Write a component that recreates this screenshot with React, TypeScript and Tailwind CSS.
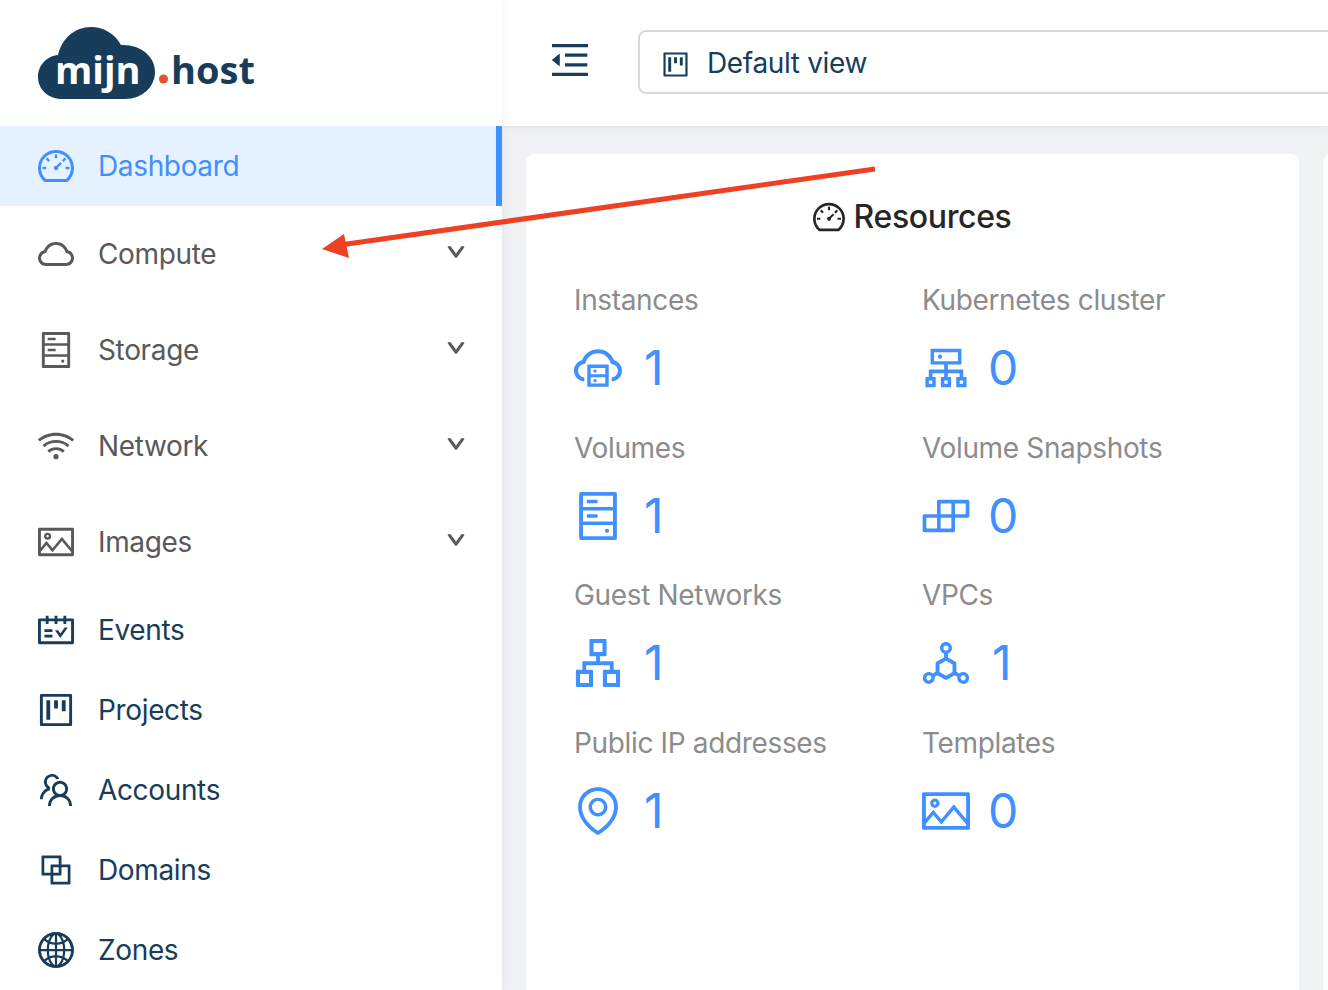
import type { ComponentType, SVGProps } from 'react'
import {
  AiOutlineApartment,
  AiOutlineBlock,
  AiOutlineBuild,
  AiOutlineCloud,
  AiOutlineCloudServer,
  AiOutlineCluster,
  AiOutlineDashboard,
  AiOutlineDeploymentUnit,
  AiOutlineDown,
  AiOutlineEnvironment,
  AiOutlineGlobal,
  AiOutlineHdd,
  AiOutlineMenuFold,
  AiOutlinePicture,
  AiOutlineProject,
  AiOutlineSchedule,
  AiOutlineTeam,
  AiOutlineWifi,
} from 'react-icons/ai'

type Icon = ComponentType<SVGProps<SVGSVGElement> & { size?: number }>

// ant icons keep their art in 64..960, crop so size means the drawn size
const crop = '64 64 896 896'

const groups: { label: string; icon: Icon }[] = [
  { label: 'Compute', icon: AiOutlineCloud },
  { label: 'Storage', icon: AiOutlineHdd },
  { label: 'Network', icon: AiOutlineWifi },
  { label: 'Images', icon: AiOutlinePicture },
]

const links: { label: string; icon: Icon }[] = [
  { label: 'Events', icon: AiOutlineSchedule },
  { label: 'Projects', icon: AiOutlineProject },
  { label: 'Accounts', icon: AiOutlineTeam },
  { label: 'Domains', icon: AiOutlineBlock },
  { label: 'Zones', icon: AiOutlineGlobal },
]

const resources: { label: string; value: number; icon: Icon }[] = [
  { label: 'Instances', value: 1, icon: AiOutlineCloudServer },
  { label: 'Kubernetes cluster', value: 0, icon: AiOutlineCluster },
  { label: 'Volumes', value: 1, icon: AiOutlineHdd },
  { label: 'Volume Snapshots', value: 0, icon: AiOutlineBuild },
  { label: 'Guest Networks', value: 1, icon: AiOutlineApartment },
  { label: 'VPCs', value: 1, icon: AiOutlineDeploymentUnit },
  { label: 'Public IP addresses', value: 1, icon: AiOutlineEnvironment },
  { label: 'Templates', value: 0, icon: AiOutlinePicture },
]

function Logo() {
  return (
    <svg width="230" height="80" viewBox="30 22 230 80" className="block tracking-normal">
      <path
        d="M62 98C48 98 38 88 38 76C38 64 47 55 58 54C62 37 75 26 91 26C104 26 115 33 121 44C140 43 155 55 155 71C155 86 142 98 125 98Z"
        fill="#173d5a"
      />
      <text x="55" y="83" fill="#fff" fontSize="38" fontWeight="700" fontFamily="'Open Sans', sans-serif">mijn</text>
      <circle cx="163.5" cy="78" r="4.5" fill="#e4512b" />
      <text x="171" y="83" fill="#173d5a" fontSize="38" fontWeight="700" fontFamily="'Open Sans', sans-serif">host</text>
    </svg>
  )
}

function Sidebar() {
  return (
    <aside className="z-10 flex h-full w-[502px] shrink-0 flex-col bg-white shadow-[2px_0_8px_rgba(29,35,41,0.05)]">
      <div className="flex h-[126px] shrink-0 items-center pl-[30px]">
        <Logo />
      </div>
      <div className="mb-2 flex h-20 shrink-0 items-center gap-6 border-r-[6px] border-[#4090ff] bg-[#e6f2ff] pl-[38px] text-[#4090ff]">
        <AiOutlineDashboard size={36} viewBox={crop} />
        <span>Dashboard</span>
      </div>
      <div className="mb-2 flex shrink-0 flex-col gap-4">
        {groups.map(g => (
          <div key={g.label} className="flex h-20 items-center gap-6 pl-[38px] pr-[37px] text-[#595959]">
            <g.icon size={36} viewBox={crop} />
            <span className="flex-1">{g.label}</span>
            <AiOutlineDown size={18} viewBox={crop} className="mb-1" strokeWidth={70} />
          </div>
        ))}
      </div>
      {links.map(l => (
        <div key={l.label} className="flex h-20 shrink-0 items-center gap-6 pl-[38px] text-[#173d5a]">
          <l.icon size={36} viewBox={crop} />
          <span>{l.label}</span>
        </div>
      ))}
    </aside>
  )
}

function Header() {
  return (
    <header className="flex h-[126px] shrink-0 items-center bg-white pl-[50px] shadow-[0_2px_8px_rgba(0,21,41,0.06)]">
      <AiOutlineMenuFold size={36} viewBox="114 114 796 796" className="mb-[6px] shrink-0 text-[#173d5a]" />
      <div className="mb-[2px] ml-[50px] flex h-16 w-[900px] shrink-0 items-center gap-[18px] rounded-lg border-2 border-[#d9d9d9] pl-[22px] text-[#173d5a]">
        <AiOutlineProject size={27} viewBox={crop} className="mt-1" />
        <span className="mt-[1px]">Default view</span>
      </div>
    </header>
  )
}

function ResourceCard() {
  return (
    <section className="h-[900px] w-[773px] shrink-0 rounded-lg bg-white px-12 pt-10">
      <h2 className="mb-[38px] flex h-[46px] items-center justify-center gap-2 text-[32px] font-medium text-[#262626]">
        <AiOutlineDashboard size={32} viewBox={crop} />
        Resources
      </h2>
      <div className="grid grid-cols-[348px_1fr]">
        {resources.map(r => (
          <div key={r.label} className="h-[147.6px]">
            <div className="text-[28px] leading-[44px] text-[#8c8c8c]">{r.label}</div>
            <div className="mt-[10px] flex h-[72px] items-center gap-[22px] text-[48px] text-[#4090ff]">
              <r.icon size={48} viewBox={crop} />
              <span className={r.value === 0 ? '-ml-[4px]' : ''}>{r.value}</span>
            </div>
          </div>
        ))}
      </div>
    </section>
  )
}

export default function App() {
  return (
    <div className="relative flex h-[990px] w-[1328px] overflow-hidden bg-[#f0f2f5] text-[28px] tracking-[-0.35px] [font-family:Inter,sans-serif]">
      <Sidebar />
      <div className="flex min-w-0 flex-1 flex-col">
        <Header />
        <main className="flex gap-6 pl-6 pt-7">
          <ResourceCard />
          <section className="h-[900px] w-[773px] shrink-0 rounded-lg bg-white" />
        </main>
      </div>
      {/* annotation arrow drawn over the screenshot */}
      <svg className="absolute left-0 top-0 z-20" width="1328" height="990" viewBox="0 0 1328 990" fill="none">
        <path d="M875 169L340 245" stroke="#ee4023" strokeWidth="5" />
        <path d="M322 249L344 234L349 258Z" fill="#ee4023" />
      </svg>
    </div>
  )
}
